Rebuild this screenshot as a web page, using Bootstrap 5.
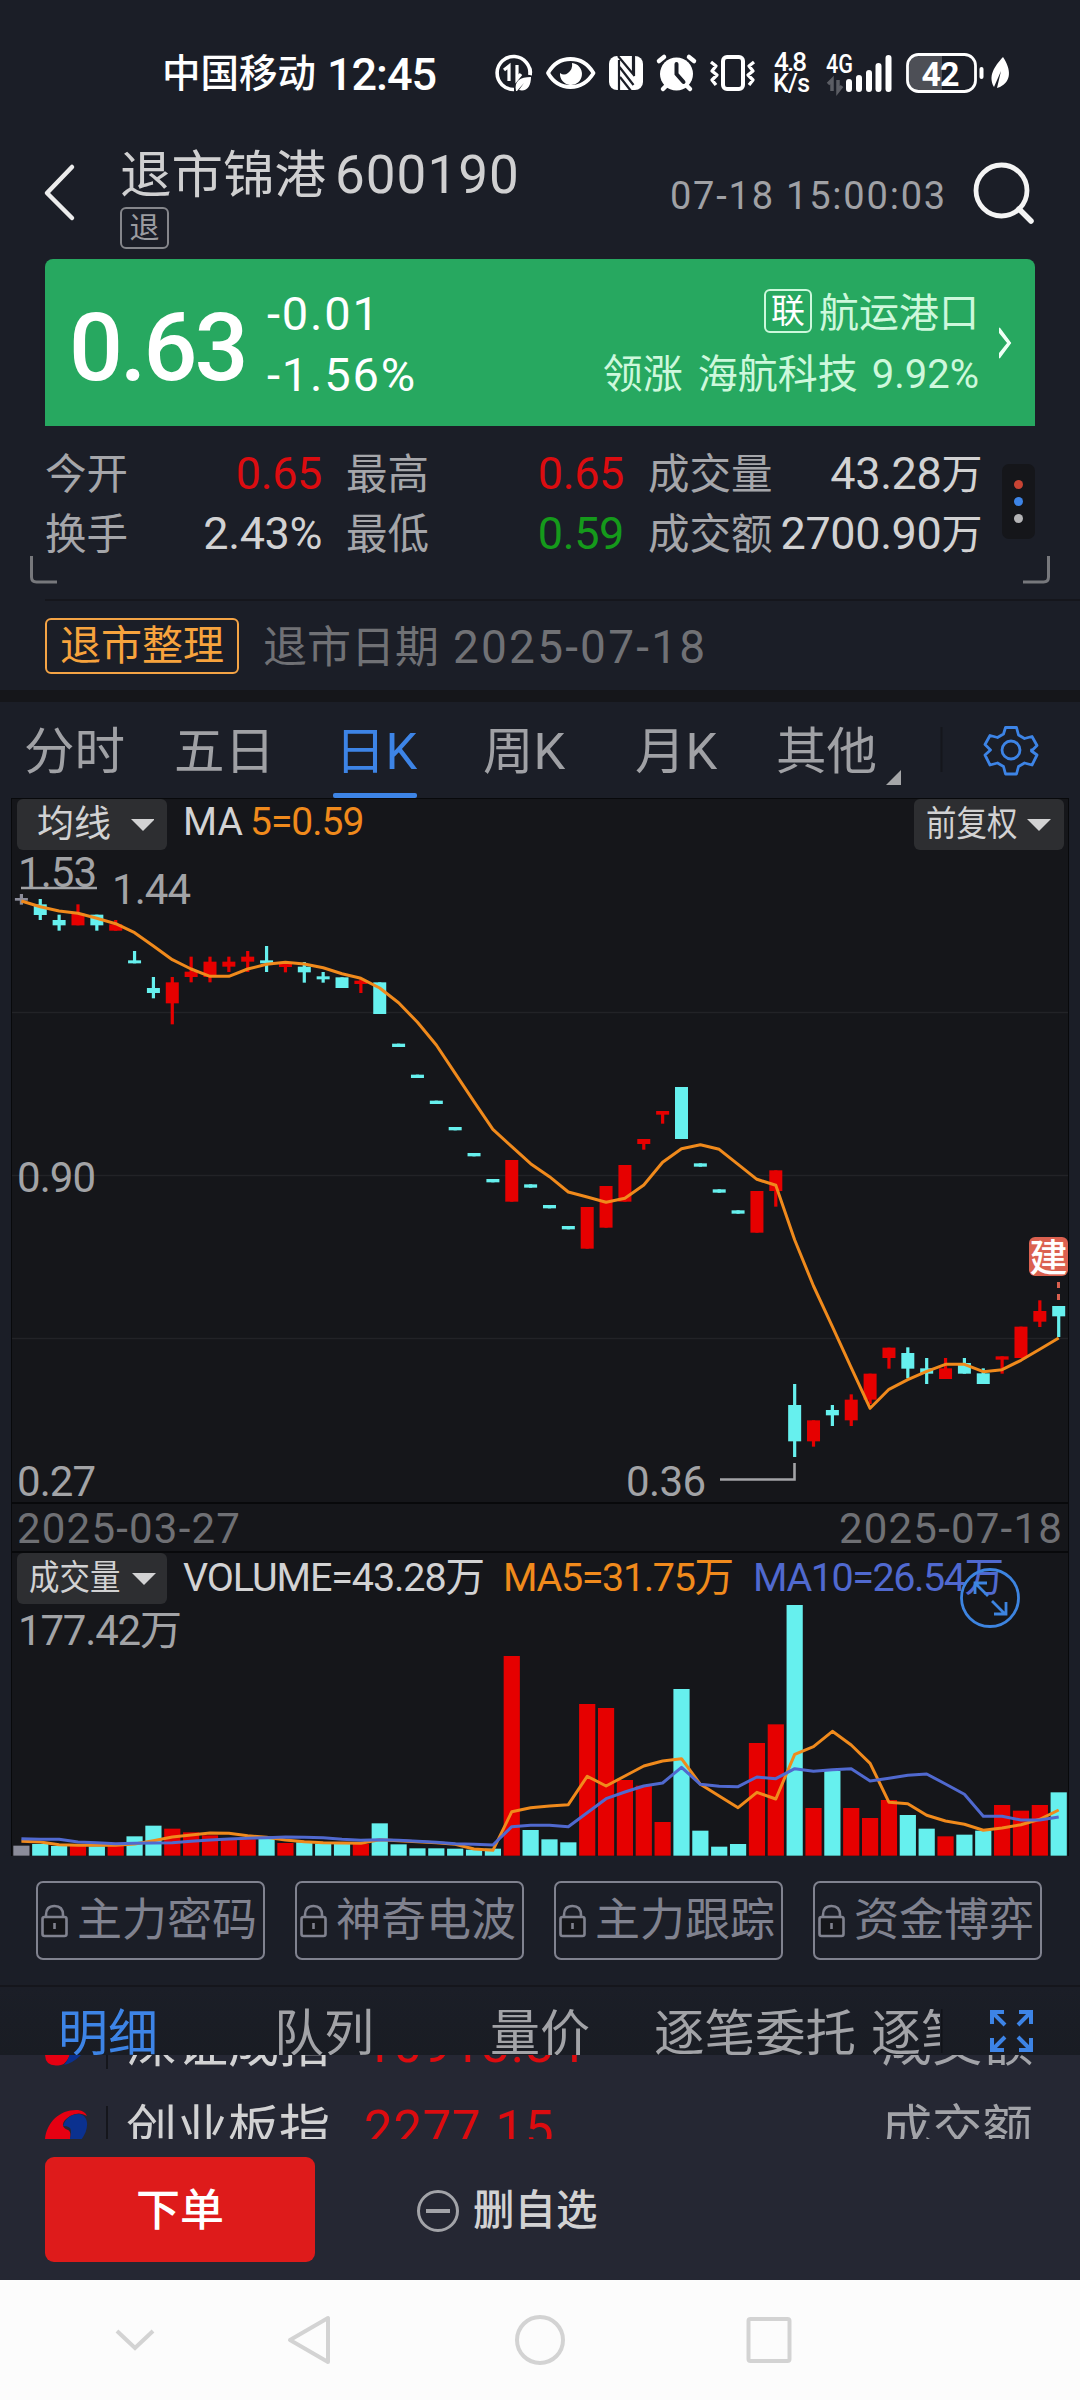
<!DOCTYPE html>
<html lang="zh-CN" data-bs-theme="dark">
<head>
<meta charset="utf-8">
<meta name="viewport" content="width=1080">
<title>退市锦港 600190</title>
<link href="https://cdn.jsdelivr.net/npm/bootstrap@5.3.0/dist/css/bootstrap.min.css" rel="stylesheet">
<style>
body{width:1080px;height:2400px;margin:0;overflow:hidden;background:#1b1e27;color:#d2d2d3;font-family:Roboto,"Noto Sans CJK SC",sans-serif;line-height:1;white-space:nowrap}
svg{display:block;flex:none}
.status-bar{height:120px}
.app-head{height:139px;padding:30px 44px 0 41px}
.head-title{padding-left:43px}
.stock-name{font-size:51.500px;line-height:51px;color:#d0d0d1}
.stock-name .code{font-size:53px;letter-spacing:1px;margin-left:9px}
.tag-tui{width:49px;height:42px;border:2px solid #85868b;border-radius:6px;font-size:30px;color:#9b9ca0;margin-top:6px}
.quote-time{font-size:38px;letter-spacing:1.8px;color:#a0a1a5;margin-top:27px}
.find{margin:10px 0 0 23px}
.quote-card{height:167px;margin:0 45px;background:#27a860;border-radius:8px 8px 0 0;color:#fff}
.price-big{font-size:95px;font-weight:500;letter-spacing:-3px;width:192px;margin-left:24px;margin-top:41px}
.change-col{font-size:47px;letter-spacing:1.8px;padding-top:31px;margin-left:6px}
.change-col div{height:61px}
.sector-col{font-size:40px;color:#cdf8dc;margin-right:20px;padding-top:31px}
.sector-col .line1{height:61px}
.sector-col .lead-co{margin-left:15px}
.sector-col .lead-pc{margin-left:14px}
.tag-lian{width:48px;height:44px;border:2px solid #cdf8dc;border-radius:6px;font-size:34px;color:#fff;margin-right:7px;margin-top:-1px}
.stat-wrap{height:173px;padding:25px 45px 0}
.stat-pair{height:60px}
.stat-lab{font-size:41.500px;color:#a5a6aa}
.stat-val{font-size:45px;letter-spacing:-.4px}
.stat-val .wan{font-size:41px}
.c1{width:277px}.c2{width:278px}.c3{width:334px}
.up{color:#dc0c10}.down{color:#159a1b}
.dot-menu{width:33px;height:75px;border-radius:7px;background:#15161a;margin-top:13px}
.dot-menu i{width:9px;height:9px;border-radius:50%}
.notice{height:91px;margin-left:45px;border-top:2px solid #15161c}
.tag-warn{width:194px;height:56px;border:2px solid #f5a445;border-radius:6px;color:#f7a33d;font-size:41px;margin-top:17px}
.notice-txt{font-size:44px;color:#707175;margin-left:24px;margin-top:23px}
.notice-txt b{font-weight:400;font-size:46px;letter-spacing:2.2px;margin-left:14px}
.band{height:12px;background:#15161a}
.k-tabs{height:96px;font-size:50.500px;color:#a0a1a5;padding-top:25px}
.k-tabs .kt{height:71px}
.k-tabs .gear{margin-top:-25px}
.kt.on,.bt.on{color:#3d84e6}
.kt.on:after{content:"";position:absolute;left:-2px;bottom:0;width:84px;height:5px;background:#3d84e6;border-radius:2px}
.chart-box{width:1058px;margin-left:11px;background:#15161a;border:1px solid #08090b;border-bottom:0;height:1058px}
.ind-row{height:53px;font-size:39px;padding-left:5px}
.ind-row.vol-row{height:51px}
.chip{width:150px;height:51px;background:#2d2e31;border-radius:6px;color:#d2d2d3}
.narrow3{width:90px;font-size:35px}
.narrow3 span{display:inline-block;transform:scaleX(.87);transform-origin:0 50%}
.chip .wide2{font-size:37px;width:93px;padding-left:20px}
.ma-lab{width:83px}
.ma-five{letter-spacing:-1px}
.or{color:#f08a1c}
.date-row{height:51px;border-top:2px solid #08090b;border-bottom:2px solid #08090b;font-size:42px;letter-spacing:1.2px;color:#6f7074;padding:3px 5px 0 5px}
.expand{position:absolute;left:947px;top:-37px}
.lock-row{height:129px;padding:25px 36px 0;gap:30px}
.lock-btn{width:229px;height:79px;border:2px solid #80828f;border-radius:7px;font-size:45px;color:#80828f;padding-left:3px}
.lock-btn svg{margin-right:9px}
.b-tabs{height:70px;border-top:2px solid #15161c;background:linear-gradient(#1b1e27,#191c23);font-size:50px;color:#a2a3a7;overflow:hidden;padding-top:22px}
.b1{margin-left:58px;width:216px}.b2{width:216px}.b3{width:164px}.b4{width:217px;font-size:50.500px}.b5{width:69px;margin-right:1px}
.idx{height:84px;background:#252733;overflow:hidden}
.idx-in{margin-top:-53px}
.idx-line{height:85px;font-size:51px;padding:0 47px 0 45px}
.idx-line .sep{width:2px;height:48px;background:#15161c;margin:0 18px 0 18px}
.idx-line .num{font-size:51px;letter-spacing:.7px;margin-left:34px}
.idx-line .amt{color:#a2a3a8;font-size:50.500px}
.act{height:141px;background:#252733;padding:18px 45px 0}
.order{width:270px;height:105px;border-radius:9px;background:#de1b1b;color:#fff;font-size:44px;font-weight:500;padding-top:3px}
.del-own{font-size:41.500px;font-weight:500;height:105px;margin-left:101px;padding-top:2px}
.del-own svg{margin-right:13px}
.sys-nav{height:120px;background:#fcfcfc}
</style>
<script src="https://cdn.jsdelivr.net/npm/bootstrap@5.3.0/dist/js/bootstrap.bundle.min.js"></script>
</head>
<body>
<div class="status-bar">
<svg width="1080" height="120" fill="none" stroke="#fff">
 <g fill="#fff" stroke="none" font-weight="500">
  <text x="162" y="87" font-size="38.500" textLength="154">中国移动</text>
  <text x="327" y="90" font-size="45" textLength="110">12:45</text>
  <text x="774" y="71" font-size="26" textLength="33">4.8</text>
  <text x="773" y="92" font-size="25" textLength="37">K/s</text>
  <text x="826" y="73" font-size="25" textLength="27" lengthAdjust="spacingAndGlyphs">4G</text>
 </g>
 <path d="M530 75A16.500 16.500 0 1 0 514 89.500" stroke-width="3.600"/>
 <path d="M530 75q1-3-.4-7" stroke-width="3.600"/>
 <path d="M504 70l5-4v15M517 65v14l4-5" stroke-width="3.200"/>
 <path d="M516 91c-2-10 4-14 15-14 0 9-4 15-12 13l5-7-7 8z" fill="#fff" stroke="none"/>
 <path d="M548 73q8-14 22.500-14t23 14q-8.500 14-23 14t-22.500-14z" stroke-width="3.800" stroke-linejoin="round"/>
 <path d="M572 63a11 11 0 1 1-12 10q4 3 8 0 5-4 4-10z" fill="#fff" stroke="none"/>
 <rect x="609" y="56" width="34" height="34" rx="8" fill="#fff" stroke="none"/>
 <path d="M619 92V60M618 56l15 18V56M619.500 67l14 18M620 77l11 14M634 56v20" stroke="#1b1e27" stroke-width="2.200"/>
 <circle cx="676.500" cy="74" r="16.500" fill="#fff" stroke="none"/>
 <path d="M659 61l5-4M694 61l-5-4M663 89l4-4M690 89l-4-4" stroke-width="4.500" stroke-linecap="round"/>
 <path d="M676.500 64v10l7 8" stroke="#1b1e27" stroke-width="4" stroke-linecap="round"/>
 <rect x="723" y="57" width="20" height="32" rx="4" stroke-width="4"/>
 <path d="M711 62l5 4-4 5 5 4-5 5 4 5M754 62l-5 4 4 5-5 4 5 5-4 5" stroke-width="3.300" stroke-linejoin="round"/>
 <path d="M828 84l4-4v11M838 80v11l4-5" stroke="#5b5d64" stroke-width="3.500"/>
 <path d="M849 82v7M859 78v11M869 73v16M878.500 66v23M888.500 58v31" stroke-width="6" stroke-linecap="round"/>
 <path d="M920 56h22v35h-22q-11 0-11-11V67q0-11 11-11z" fill="#4d4f56" stroke="none"/>
 <rect x="907.500" y="54.500" width="68" height="37" rx="11" stroke-width="2.800"/>
 <text x="921.500" y="85.500" font-size="34" font-weight="700" textLength="38" fill="#fff" stroke="none">42</text>
 <path d="M981.500 69v8" stroke-width="4" stroke-linecap="round"/>
 <path d="M1003 57c8 12 9 24-3 30l-3 1 4-17-7 16c-6-11 0-20 9-30z" fill="#fff" stroke="none"/>
</svg>
</div>

<header class="app-head d-flex align-items-start">
 <svg width="36" height="66" viewBox="0 0 36 66" class="mt-2"><path d="M31 9L6 35l25 25" fill="none" stroke="#ececec" stroke-width="4.500" stroke-linejoin="round" stroke-linecap="round"/></svg>
 <div class="head-title">
  <div class="stock-name">退市锦港<span class="code">600190</span></div>
  <div class="tag-tui d-flex align-items-center justify-content-center">退</div>
 </div>
 <div class="quote-time ms-auto">07-18 15:00:03</div>
 <svg class="find" width="66" height="66" viewBox="0 0 66 66" fill="none" stroke="#f4f4f4" stroke-width="4.800"><circle cx="31.500" cy="30.500" r="25.500"/><path d="M49 49l12 12" stroke-linecap="round" stroke-width="5.500"/></svg>
</header>

<section class="quote-card d-flex">
 <div class="price-big">0.63</div>
 <div class="change-col"><div>-0.01</div><div>-1.56%</div></div>
 <div class="sector-col ms-auto d-flex flex-column align-items-end">
  <div class="line1 d-flex"><span class="tag-lian d-flex align-items-center justify-content-center">联</span><span class="pt-1">航运港口</span></div>
  <div class="pt-1">领涨<span class="lead-co">海航科技</span><span class="lead-pc">9.92%</span></div>
 </div>
 <svg width="36" height="167" viewBox="0 0 36 167"><path d="M-1 69l12 15L-1 99" fill="none" stroke="#effff5" stroke-width="3" transform="translate(-1 0)"/><path d="M0 69l11 15L0 99" fill="none" stroke="#effff5" stroke-width="2"/></svg>
</section>

<section class="stat-wrap d-flex position-relative">
 <div class="d-flex gap-4">
  <div class="c1">
   <div class="stat-pair d-flex justify-content-between align-items-baseline"><span class="stat-lab">今开</span><span class="stat-val up">0.65</span></div>
   <div class="stat-pair d-flex justify-content-between align-items-baseline"><span class="stat-lab">换手</span><span class="stat-val">2.43%</span></div>
  </div>
  <div class="c2">
   <div class="stat-pair d-flex justify-content-between align-items-baseline"><span class="stat-lab">最高</span><span class="stat-val up">0.65</span></div>
   <div class="stat-pair d-flex justify-content-between align-items-baseline"><span class="stat-lab">最低</span><span class="stat-val down">0.59</span></div>
  </div>
  <div class="c3">
   <div class="stat-pair d-flex justify-content-between align-items-baseline"><span class="stat-lab">成交量</span><span class="stat-val">43.28<span class="wan">万</span></span></div>
   <div class="stat-pair d-flex justify-content-between align-items-baseline"><span class="stat-lab">成交额</span><span class="stat-val">2700.90<span class="wan">万</span></span></div>
  </div>
 </div>
 <div class="dot-menu ms-auto d-flex flex-column align-items-center justify-content-center gap-2"><i style="background:#c84434"></i><i style="background:#3d84e6"></i><i style="background:#b4b4b6"></i></div>
 <svg class="position-absolute start-0 bottom-0" width="1080" height="50" fill="none" stroke="#77787c" stroke-width="3"><path d="M31.500 7v21q0 5 5 5H57M1048.500 7v21q0 5-5 5H1023"/></svg>
</section>

<section class="notice d-flex">
 <div class="tag-warn d-flex align-items-center justify-content-center">退市整理</div>
 <div class="notice-txt">退市日期<b>2025-07-18</b></div>
</section>
<div class="band"></div>

<nav class="k-tabs d-flex position-relative" id="kTabs"></nav>

<main class="chart-box">
 <div class="ind-row d-flex">
  <div class="chip d-flex align-items-center"><span class="wide2">均线</span><svg width="44" height="14"><path d="M21 1h24L33 13z" fill="#d2d2d3"/></svg></div>
  <div class="ps-3 pt-1 ma-lab">MA</div><div class="or ma-five pt-1">5=0.59</div>
  <div class="chip ms-auto d-flex align-items-center ps-2 me-1"><span class="narrow3 ms-1"><span>前复权</span></span><svg width="44" height="14"><path d="M11 1h24L23 13z" fill="#d2d2d3"/></svg></div>
 </div>
 <svg id="kChart" width="1056" height="650" viewBox="12 852 1056 650"></svg>
 <div class="date-row d-flex justify-content-between align-items-center"><span>2025-03-27</span><span>2025-07-18</span></div>
 <div class="ind-row vol-row d-flex">
  <div class="chip d-flex align-items-center ps-2"><span class="narrow3 ms-1"><span>成交量</span></span><svg width="44" height="14"><path d="M13 1h24L25 13z" fill="#d2d2d3"/></svg></div>
  <svg width="890" height="51"><g font-size="39.500"><text x="16" y="38" textLength="302" fill="#d2d2d3">VOLUME=43.28万</text><text x="336" y="38" textLength="231" fill="#f08a1c">MA5=31.75万</text><text x="586" y="38" textLength="251" fill="#5069cf">MA10=26.54万</text></g></svg>
 </div>
 <div class="position-relative">
  <svg id="vChart" width="1056" height="252" viewBox="12 1604 1056 252"></svg>
  <svg class="expand" width="62" height="62" viewBox="0 0 62 62" fill="none" stroke="#3d84e0" stroke-width="2.800"><circle cx="31" cy="31" r="28.500"/><path d="M16 27V16h12M17 17l12 12M33 34l13 13M35 47h12V35"/></svg>
 </div>
</main>

<section class="lock-row d-flex" id="locks"></section>

<nav class="b-tabs d-flex position-relative">
 <span class="bt on b1">明细</span><span class="bt b2">队列</span><span class="bt b3">量价</span><span class="bt b4">逐笔委托</span><span class="bt b5 overflow-hidden">逐笔</span>
 <svg width="139" height="46" viewBox="941 2009 139 46" fill="none" stroke="#3d84e6" stroke-width="4"><path d="M941 2009v44" stroke="#111319" stroke-width="3"/><path d="M992 2024v-12h12M993 2013l12 12M1019 2012h12v12M1030 2013l-12 12M992 2038v12h12M993 2049l12-12M1019 2050h12v-12M1030 2049l-12-12"/></svg>
</nav>

<section class="idx"><div class="idx-in">
 <div class="idx-line d-flex align-items-center"><svg class="logo" width="43" height="42" viewBox="0 0 43 42"><path d="M0 30C2 12 16 0 33 1q7 1 9 6-8-5-17 0C17 12 15 18 23 21c6 3 0 19-7 20Q0 44 0 30z" fill="#e60012"/><path d="M18 17q4-12 16-12c12 2 9 18 2 26q-8 8-17 10 7-8 7-19 0-5-8-5z" fill="#0b318f"/></svg><span class="sep"></span>深证成指<span class="num up">10913.84</span><span class="ms-auto amt">成交额</span></div>
 <div class="idx-line d-flex align-items-center"><svg class="logo" width="43" height="42" viewBox="0 0 43 42"><path d="M0 30C2 12 16 0 33 1q7 1 9 6-8-5-17 0C17 12 15 18 23 21c6 3 0 19-7 20Q0 44 0 30z" fill="#e60012"/><path d="M18 17q4-12 16-12c12 2 9 18 2 26q-8 8-17 10 7-8 7-19 0-5-8-5z" fill="#0b318f"/></svg><span class="sep"></span>创业板指<span class="num up">2277.15</span><span class="ms-auto amt">成交额</span></div>
</div></section>

<section class="act d-flex">
 <div class="order d-flex align-items-center justify-content-center">下单</div>
 <div class="del-own d-flex align-items-center"><svg width="44" height="44" fill="none" stroke="#a2a3a8" stroke-width="3"><circle cx="22" cy="22" r="19.500"/><path d="M10 22h24" stroke-width="4"/></svg>删自选</div>
</section>

<div class="sys-nav"><svg width="1080" height="120" fill="none" stroke="#d3d3d3" stroke-width="4" stroke-linejoin="round"><path d="M117 51l18 17 18-17" stroke-linejoin="miter"/><path d="M328 38v44L290 60z"/><circle cx="540" cy="60" r="23"/><rect x="748.500" y="39" width="41" height="42" rx="2"/></svg></div>

<script>
// Period tabs: label, left edge
var tabs=[['分时',24],['五日',174],['日K',335],['周K',483],['月K',635],['其他',776]];
var k=document.getElementById('kTabs'),h='',e=0;
tabs.forEach(function(t,i){h+='<span class="kt position-relative'+(i==2?' on':'')+'" style="margin-left:'+(t[1]-e)+'px;width:80px">'+t[0]+'</span>';e=t[1]+80;});
h+='<svg class="gear" width="222" height="96" viewBox="856 702 222 96"><path d="M901 770v15h-15z" fill="#a5a6a8"/><path d="M941.500 727v45" stroke="#15161c" stroke-width="2"/><g fill="none" stroke="#3d84e6" stroke-width="2.800" stroke-linejoin="round"><circle cx="1011" cy="750" r="9"/><path d="M1005.500 727.500h11l2 7.500 6 3.500 7.500-2 5 9-5.500 5.500v-1 1l5.500 4-5 10-7.500-2-6 3.500-2 7.500h-11l-2-7.500-6-3.500-7.500 2-5-10 5.500-5-5.500-5.500 5-9 7.500 2 6-3.500z"/></g></svg>';
k.innerHTML=h;

document.getElementById('locks').innerHTML=['主力密码','神奇电波','主力跟踪','资金博弈'].map(function(s){
 return '<div class="lock-btn d-flex align-items-center"><svg width="27" height="34" fill="none" stroke="#80828f" stroke-width="2.600"><path d="M5 13v-2q0-9 8.500-9t8.500 9v2"/><rect x="1.500" y="13" width="24" height="19" rx="2" fill="#15161a"/><path d="M13.500 19v6"/></svg>'+s+'</div>';}).join('');

var X=function(i){return 21.4+i*18.86},R='#e60000',C='#66f0ee',G='#8b8c9a';
// Candles: colour, high, body top, body bottom, low, in thirds of a pixel below y=780
var cd=[[G,342,354,362,374],[C,357,373,405,420],[C,404,420,436,452],[R,373,400,436,436],[C,404,404,436,452],[R,420,433,452,452],[C,513,541,550,550],[C,591,624,639,655],[R,591,607,670,733],[R,530,575,591,607],[R,530,545,591,607],[R,530,545,560,576],[R,513,530,545,576],[C,498,541,550,576],[R,552,552,561,577],[C,546,560,577,608],[C,576,589,598,608],[C,592,592,624,624],[R,597,602,612,639],[C,607,607,702,702]];
[791,884,962,1041,1119,1197].forEach(function(y){cd.push([C,y,y,y+10,y+10])});
cd.push([R,1140,1140,1265,1265]);
[1213,1275,1338].forEach(function(y){cd.push([C,y,y,y+10,y+10])});
cd.push([R,1281,1281,1406,1406],[R,1218,1218,1343,1343],[R,1155,1155,1265,1265],[R,1077,1077,1092,1109],[R,993,993,1004,1031],[C,921,921,1077,1077]);
[1150,1228,1291].forEach(function(y){cd.push([C,y,y,y+10,y+10])});
cd.push([R,1233,1233,1358,1358],[R,1171,1171,1233,1280]);
[[C,552,615,724,771],[R,661,661,724,740],[C,615,630,646,678],[R,583,599,661,678],[R,521,521,599,612],[R,443,443,474,506],[C,442,459,506,535],[C,474,505,521,552],[R,474,505,537,537],[C,474,489,521,521],[C,505,520,552,552],[R,469,469,479,521],[R,380,380,474,474],[R,301,333,365,381],[C,318,318,349,411]].forEach(function(c){cd.push([c[0],c[1]+1260,c[2]+1260,c[3]+1260,c[4]+1260])});
var ma=[363,380,393,400,415,431,458,498,539,567,589,589,567,553,547,552,563,581,595,624,668,727,795,880,965,1048,1100,1151,1190,1236,1251,1267,1255,1215,1147,1106,1094,1108,1153,1198,1216,1380,1518,1640,1763,1885,1828,1799,1774,1753,1753,1775,1769,1741,1708,1674];
function line(a,b,col){return '<polyline fill="none" stroke-linejoin="round" stroke-width="3" stroke="'+col+'" points="'+a.map(function(v,i){return X(i).toFixed(1)+','+(b+v/3).toFixed(1)}).join(' ')+'"/>'}
var s='<path d="M12 1012.500H1068M12 1175.500H1068M12 1338.500H1068" stroke="#222327" stroke-width="1.500"/>';
cd.forEach(function(c,i){var x=X(i),y=function(v){return 780+v/3};
 s+='<rect x="'+(x-1.6)+'" width="3.200" y="'+y(c[1])+'" height="'+(c[4]-c[1])/3+'" fill="'+c[0]+'"/><rect x="'+(x-6.5)+'" width="13" y="'+y(c[2])+'" height="'+(c[3]-c[2])/3+'" fill="'+c[0]+'"/>';});
s+=line(ma,780,'#f08a1c');
s+='<g fill="#a2a3a6" font-size="42"><text x="18" y="887" textLength="79">1.53</text><text x="112" y="904" textLength="79">1.44</text><text x="17" y="1192" textLength="79">0.90</text><text x="17" y="1496" textLength="79">0.27</text><text x="626" y="1496" textLength="80">0.36</text></g>';
s+='<path d="M21 888h76M720 1479.500h74.500V1463" fill="none" stroke="#a2a3a6" stroke-width="2.600"/>';
s+='<path d="M1058.500 1282v19" stroke="#d9604f" stroke-width="3" stroke-dasharray="6 6"/><rect x="1029" y="1237" width="39" height="39" rx="6" fill="#db6150"/><text x="1029.500" y="1271" font-size="38" font-weight="500" fill="#fff">建</text>';
document.getElementById('kChart').innerHTML=s;

// Volume bars: top edge in thirds of a pixel below y=1540, the base line is at 947
var vol=[917,912,918,918,919,918,889,857,866,877,886,898,898,896,909,907,911,912,912,850,913,925,925,926,929,926,348,870,898,907,492,504,720,737,846,447,872,920,912,609,553,195,804,693,804,834,780,825,866,889,884,872,795,812,795,757];
var v5=[904,906,914,916,916,916,912,902,891,885,879,880,887,892,900,905,908,909,910,899,902,905,908,913,927,931,815,803,798,794,709,738,708,678,663,656,733,768,803,757,777,643,620,574,615,670,787,791,826,843,853,871,864,854,838,810];
var v10=[896,898,898,906,908,911,910,909,908,904,900,897,895,893,891,892,893,898,901,899,901,904,907,911,913,915,860,856,856,860,818,776,756,738,729,682,733,739,740,711,716,686,694,689,686,723,715,706,702,732,763,829,829,840,840,831];
var w='<text x="18" y="1645" font-size="42" fill="#a2a3a6" textLength="164">177.42万</text>';
vol.forEach(function(t,i){w+='<rect x="'+(X(i)-8.1)+'" width="16.200" y="'+(1540+t/3)+'" height="'+(947-t)/3+'" fill="'+cd[i][0]+'"/>'});
w+=line(v5,1540,'#f08a1c')+line(v10,1540,'#5069cf');
document.getElementById('vChart').innerHTML=w;
</script>
</body>
</html>
